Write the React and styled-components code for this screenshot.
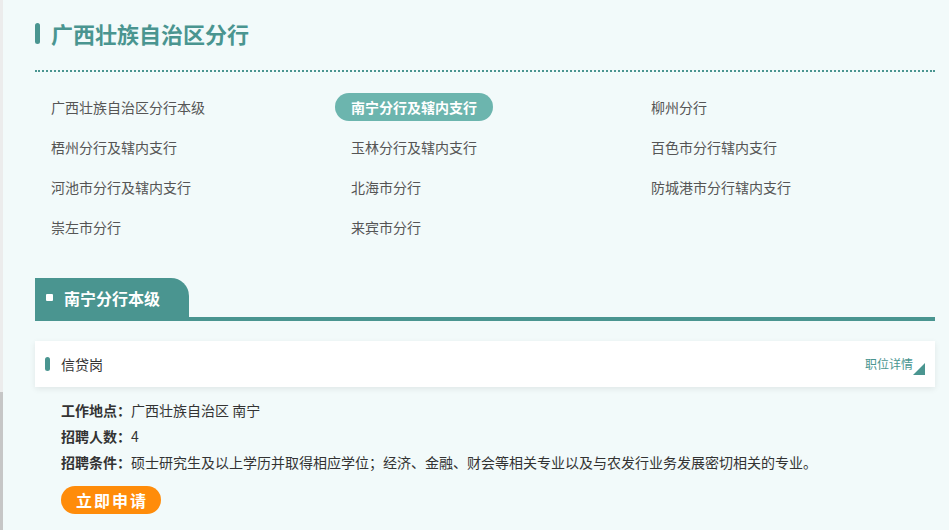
import React from 'react';
import styled, { createGlobalStyle } from 'styled-components';

const GlobalStyle = createGlobalStyle`
  html, body {
    margin: 0;
    padding: 0;
    background: #f2fafa;
  }
  body {
    font-family: "Noto Sans CJK SC", "Noto Sans", "Liberation Sans", sans-serif;
    color: #333;
  }
`;

const teal = '#4a9590';

const Page = styled.div`
  display: flex;
  min-height: 530px;
`;

const Rail = styled.div`
  width: 3px;
  display: flex;
  flex-direction: column;
  flex-shrink: 0;
`;

const RailPart = styled.div`
  background: ${({ $dark }) => ($dark ? '#c6c6c6' : '#ececec')};
  height: ${({ $dark }) => ($dark ? 'auto' : '392px')};
  flex: ${({ $dark }) => ($dark ? 1 : 'none')};
`;

const Main = styled.main`
  flex: 1;
  padding: 18px 16px 0 32px;
  background: #f2fafa;
`;

const Header = styled.div`
  display: flex;
  align-items: center;
  gap: 11px;
  height: 30px;
  padding-bottom: 22px;
  border-bottom: 2px dotted ${teal};
`;

const HeaderMark = styled.span`
  width: 5px;
  height: 21px;
  border-radius: 3px;
  background: ${teal};
`;

const Title = styled.h2`
  margin: 0;
  font-size: 22px;
  font-weight: 700;
  color: ${teal};
  line-height: 30px;
`;

const BranchGrid = styled.ul`
  list-style: none;
  margin: 15px 0 0;
  padding: 0;
  display: grid;
  grid-template-columns: repeat(3, 300px);
  grid-auto-rows: 40px;
  align-items: center;
`;

const BranchItem = styled.li`
  justify-self: start;
  height: 28px;
  line-height: 28px;
  padding: 0 16px;
  border-radius: 14px;
  font-size: 14px;
  white-space: nowrap;
  cursor: pointer;
  color: ${({ $active }) => ($active ? '#fff' : '#555')};
  background: ${({ $active }) => ($active ? '#6cb5ae' : 'transparent')};
  font-weight: ${({ $active }) => ($active ? 700 : 400)};
`;

const TabBar = styled.div`
  display: flex;
  margin-top: 31px;
  border-bottom: 4px solid ${teal};
`;

const Tab = styled.div`
  display: flex;
  align-items: center;
  gap: 11px;
  height: 39px;
  width: 154px;
  box-sizing: border-box;
  padding-left: 11px;
  background: ${teal};
  border-top-right-radius: 18px;
  color: #fff;
  font-size: 16px;
  font-weight: 700;
`;

const TabDot = styled.span`
  width: 7px;
  height: 7px;
  border-radius: 1px;
  background: #fff;
`;

const JobCard = styled.div`
  display: flex;
  align-items: center;
  justify-content: space-between;
  margin-top: 20px;
  height: 46px;
  padding: 0 10px;
  background: #fff;
  box-shadow: 0 2px 6px rgba(0, 0, 0, 0.08);
`;

const JobName = styled.div`
  display: flex;
  align-items: center;
  gap: 11px;
  font-size: 14px;
  color: #333;
`;

const JobMark = styled.span`
  width: 5px;
  height: 14px;
  border-radius: 3px;
  background: ${teal};
`;

const DetailLink = styled.a`
  display: flex;
  align-items: flex-end;
  font-size: 12px;
  line-height: 16px;
  color: ${teal};
  text-decoration: none;
  cursor: pointer;
`;

const Corner = styled.span`
  width: 0;
  height: 0;
  margin-bottom: -3px;
  border-left: 12px solid transparent;
  border-bottom: 12px solid ${teal};
`;

const Details = styled.div`
  padding: 10px 0 0 26px;
`;

const Line = styled.p`
  margin: 0;
  font-size: 14px;
  line-height: 26px;
  color: #333;
`;

const Label = styled.b`
  font-weight: 700;
`;

const ApplyButton = styled.button`
  margin-top: 11px;
  width: 100px;
  height: 28px;
  border: none;
  border-radius: 14px;
  background: #ff8c0a;
  color: #fff;
  font-family: inherit;
  font-size: 16px;
  font-weight: 700;
  letter-spacing: 2px;
  padding: 0 0 0 2px;
  cursor: pointer;
`;

const branches = [
  '广西壮族自治区分行本级',
  '南宁分行及辖内支行',
  '柳州分行',
  '梧州分行及辖内支行',
  '玉林分行及辖内支行',
  '百色市分行辖内支行',
  '河池市分行及辖内支行',
  '北海市分行',
  '防城港市分行辖内支行',
  '崇左市分行',
  '来宾市分行',
];

const App = () => {
  return (
    <Page>
      <GlobalStyle />
      <Rail>
        <RailPart />
        <RailPart $dark />
      </Rail>
      <Main>
        <Header>
          <HeaderMark />
          <Title>广西壮族自治区分行</Title>
        </Header>
        <BranchGrid>
          {branches.map((name, i) => (
            <BranchItem key={name} $active={i === 1}>
              {name}
            </BranchItem>
          ))}
        </BranchGrid>
        <TabBar>
          <Tab>
            <TabDot />
            南宁分行本级
          </Tab>
        </TabBar>
        <JobCard>
          <JobName>
            <JobMark />
            信贷岗
          </JobName>
          <DetailLink>
            职位详情
            <Corner />
          </DetailLink>
        </JobCard>
        <Details>
          <Line>
            <Label>工作地点：</Label>广西壮族自治区 南宁
          </Line>
          <Line>
            <Label>招聘人数：</Label>4
          </Line>
          <Line>
            <Label>招聘条件：</Label>硕士研究生及以上学历并取得相应学位；经济、金融、财会等相关专业以及与农发行业务发展密切相关的专业。
          </Line>
          <ApplyButton>立即申请</ApplyButton>
        </Details>
      </Main>
    </Page>
  );
};

export default App;
